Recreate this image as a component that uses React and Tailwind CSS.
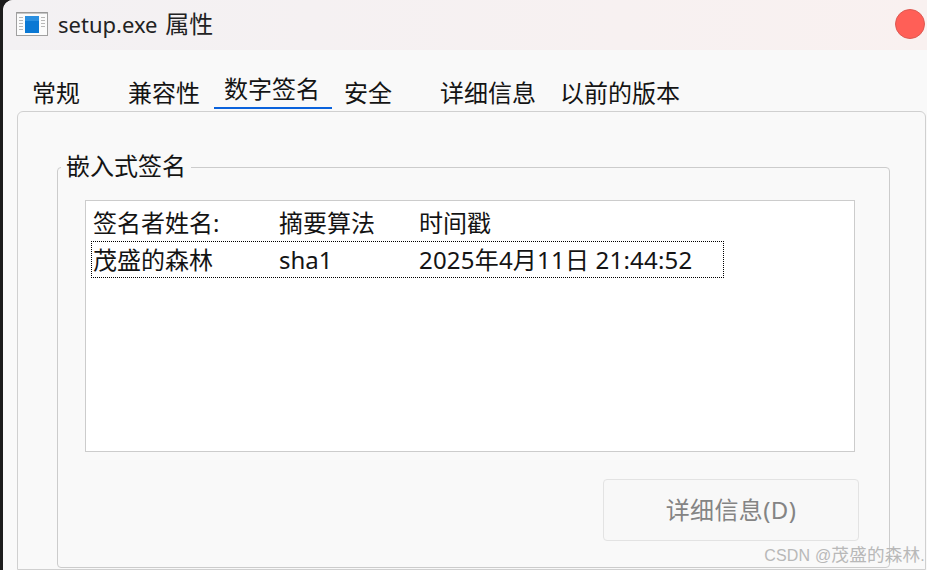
function Tab({ label, className = '' }) {
  return <div className={`text-[24px] leading-[32px] whitespace-nowrap ${className}`}>{label}</div>
}

export default function App() {
  return (
    <div className="w-[927px] h-[570px] overflow-hidden bg-[#1c1c1c] font-['Noto_Sans','Noto_Sans_CJK_SC',sans-serif] text-[#141414] relative">
      <div className="ml-[3px] h-full rounded-tl-[10px] overflow-hidden bg-[#f9f9f9] flex flex-col">
        {/* Title bar */}
        <div className="h-[50px] shrink-0 flex items-center justify-between pl-[13px] pr-[2px] pb-[2px] bg-gradient-to-r from-[#f3f1f3] to-[#f9f1f0]">
          <div className="flex items-center gap-[10px]">
            <svg width="32" height="24" viewBox="0 0 32 24">
              <rect x="0.5" y="0.5" width="31" height="23" fill="#fbfbfb" stroke="#a0a0a0" />
              <path d="M1 1h30" stroke="#909090" />
              <rect x="9" y="4" width="14" height="17" fill="#0a78d4" />
              <rect x="9" y="4" width="14" height="5" fill="#2a8fe0" />
              <path d="M3 5.5h4M3 8.5h4M3 11.5h4M3 14.5h4M3 17.5h4M25 5.5h4M25 8.5h4M25 11.5h4M25 14.5h4" stroke="#b8b8b8" />
            </svg>
            <span className="text-[22px] leading-[30px] text-[#222] whitespace-nowrap">setup.exe <span className="text-[24px] ml-[2px]">属性</span></span>
          </div>
          <div className="w-[30px] h-[30px] rounded-full bg-[#ff5f57] border border-[#dd5a52]" />
        </div>

        {/* Tabs */}
        <div className="h-[61px] shrink-0 flex items-end pl-[29px]">
          <Tab label="常规" className="w-[96px] pb-[2px]" />
          <Tab label="兼容性" className="w-[72px] pb-[2px]" />
          <div className="w-[118px] ml-[14px] h-[36px] border-b-2 border-[#0a62dc] mb-[2px] pl-[10px]"><Tab label="数字签名" /></div>
          <Tab label="安全" className="w-[96px] ml-[12px] pb-[2px]" />
          <Tab label="详细信息" className="w-[120px] pb-[2px]" />
          <Tab label="以前的版本" className="pb-[2px]" />
        </div>

        {/* Panel */}
        <div className="ml-[14px] mr-[1px] flex-1 border border-[#d0d0d0] rounded-t-[6px] bg-[#f9f9f9] pt-[55px] pl-[39px] pr-[35px]">
          <div className="h-[401px] border border-[#cccccc] rounded-[4px] relative pt-[32px] pl-[27px] pr-[34px]">
            <div className="absolute left-[3px] top-[-18px] px-[5px] bg-[#f9f9f9] text-[24px] leading-[32px] whitespace-nowrap">嵌入式签名</div>
            <div className="w-[770px] h-[252px] bg-white border border-[#cccccc] pt-[6px] text-[24px] leading-[32px]">
              <div className="flex pl-[7px] h-[34px] whitespace-nowrap">
                <div className="w-[186px]">签名者姓名:</div>
                <div className="w-[140px]">摘要算法</div>
                <div>时间戳</div>
              </div>
              <div className="ml-[5px] w-[633px] h-[37px] border border-dotted border-black flex items-center pl-[1px] whitespace-nowrap">
                <div className="w-[186px]">茂盛的森林</div>
                <div className="w-[140px]">sha1</div>
                <div className="tracking-[0.2px]">2025年4月11日 21:44:52</div>
              </div>
            </div>
            <div className="mt-[27px] flex justify-end">
              <div className="w-[256px] h-[62px] mr-[-4px] border border-[#e3e3e3] rounded-[4px] flex items-center justify-center text-[24px] tracking-[0.4px] text-[#848484] bg-[#f8f8f8]">详细信息(D)</div>
            </div>
          </div>
        </div>
      </div>
      <div className="absolute right-[2px] top-[543px] text-[16px] leading-[24px] tracking-[0.2px] text-[#b8b8b8] whitespace-nowrap font-['Liberation_Sans','Noto_Sans_CJK_SC',sans-serif]">CSDN @<span className="text-[17.6px]">茂盛的森林</span>.</div>
    </div>
  )
}
